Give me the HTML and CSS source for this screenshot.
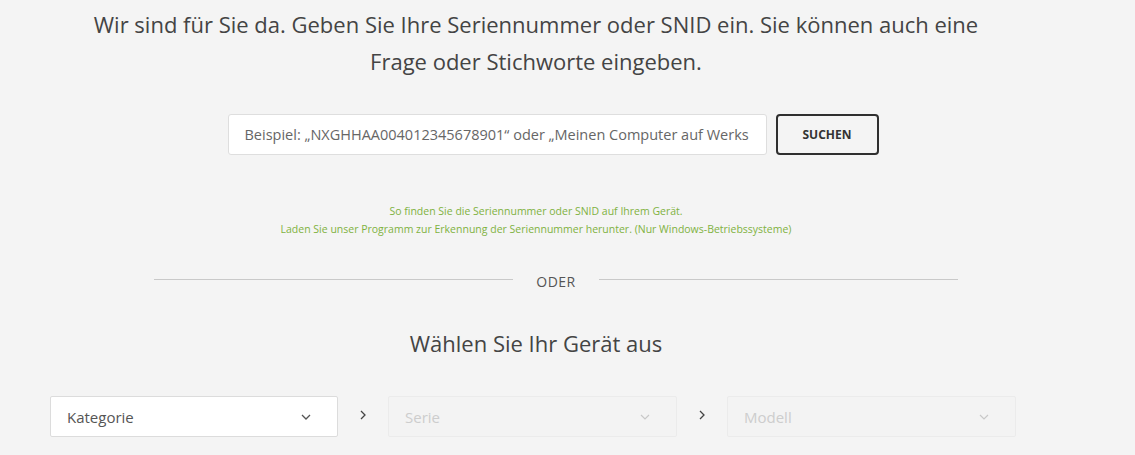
FILE: index.html
```html
<!DOCTYPE html>
<html lang="de">
<head>
<meta charset="utf-8">
<link rel="stylesheet" href="styles.css">
</head>
<body>
<main class="page">
  <h1 class="intro">Wir sind für Sie da. Geben Sie Ihre Seriennummer oder SNID ein. Sie können auch eine Frage oder Stichworte eingeben.</h1>
  <form class="search">
    <div class="search-input">Beispiel: „NXGHHAA004012345678901“ oder „Meinen Computer auf Werks</div>
    <button type="button" class="search-btn">SUCHEN</button>
  </form>
  <div class="hints">
    <a class="hint">So finden Sie die Seriennummer oder SNID auf Ihrem Gerät.</a>
    <a class="hint">Laden Sie unser Programm zur Erkennung der Seriennummer herunter. (Nur Windows-Betriebssysteme)</a>
  </div>
  <div class="divider">
    <span class="rule"></span>
    <span class="divider-text">ODER</span>
    <span class="rule"></span>
  </div>
  <h2 class="device-title">Wählen Sie Ihr Gerät aus</h2>
  <div class="selects">
    <div class="select">
      <span class="select-label">Kategorie</span>
      <svg class="caret" width="10" height="6" viewBox="0 0 10 6"><path d="M1 1l4 4 4-4" fill="none" stroke="#555" stroke-width="1.3"/></svg>
    </div>
    <div class="step"><svg width="6" height="10" viewBox="0 0 6 10"><path d="M1 1l4 4-4 4" fill="none" stroke="#444" stroke-width="1.3"/></svg></div>
    <div class="select disabled">
      <span class="select-label">Serie</span>
      <svg class="caret" width="10" height="6" viewBox="0 0 10 6"><path d="M1 1l4 4 4-4" fill="none" stroke="#c8c8c8" stroke-width="1.2"/></svg>
    </div>
    <div class="step"><svg width="6" height="10" viewBox="0 0 6 10"><path d="M1 1l4 4-4 4" fill="none" stroke="#444" stroke-width="1.3"/></svg></div>
    <div class="select disabled">
      <span class="select-label">Modell</span>
      <svg class="caret" width="10" height="6" viewBox="0 0 10 6"><path d="M1 1l4 4 4-4" fill="none" stroke="#c8c8c8" stroke-width="1.2"/></svg>
    </div>
  </div>
</main>
</body>
</html>
```

FILE: styles.css
```css
html, body {
  margin: 0;
  padding: 0;
  background: #f4f4f4;
}
body {
  font-family: "Open Sans", "Noto Sans", sans-serif;
  color: #444;
  overflow: hidden;
}
.page {
  width: 1072px;
  display: flex;
  flex-direction: column;
}
.intro {
  margin: 6px 0 0;
  padding: 0 80px;
  font-size: 22px;
  font-weight: 400;
  line-height: 37px;
  text-align: center;
  color: #444;
}
.search {
  margin: 34px 0 0;
  display: flex;
  justify-content: center;
  padding-left: 34px;
  gap: 9px;
}
.search-input {
  box-sizing: border-box;
  width: 539px;
  height: 41px;
  padding: 0 16px;
  background: #fff;
  border: 1px solid #dedede;
  border-radius: 3px;
  font-size: 14.5px;
  line-height: 39px;
  color: #666;
  white-space: nowrap;
  overflow: hidden;
}
.search-btn {
  box-sizing: border-box;
  width: 103px;
  height: 41px;
  border: 2px solid #2f2f2f;
  border-radius: 4px;
  background: #f4f4f4;
  font-family: "Open Sans", "Noto Sans", sans-serif;
  font-size: 12px;
  font-weight: 700;
  color: #333;
  padding: 0;
}
.hints {
  margin-top: 47px;
  display: flex;
  flex-direction: column;
  align-items: center;
}
.hint {
  font-size: 10.5px;
  line-height: 18px;
  color: #7fb241;
}
.divider {
  margin: 31px 0 0 154px;
  width: 804px;
  display: flex;
  align-items: center;
}
.rule {
  flex: 1;
  height: 1px;
  background: #c9c9c9;
}
.divider-text {
  width: 86px;
  text-align: center;
  font-size: 14px;
  letter-spacing: 0.5px;
  color: #555;
  line-height: 20px;
  position: relative;
  top: 3px;
}
.device-title {
  margin: 38px 0 0;
  text-align: center;
  font-size: 22px;
  font-weight: 400;
  line-height: 32px;
  color: #444;
}
.selects {
  margin: 37px 0 0 50px;
  display: flex;
  align-items: center;
}
.select {
  box-sizing: border-box;
  width: 288px;
  height: 41px;
  padding: 0 22px 0 16px;
  background: #fff;
  border: 1px solid #dcdcdc;
  border-radius: 2px;
  display: flex;
  align-items: center;
  justify-content: space-between;
}
.select-label {
  font-size: 15px;
  color: #555;
}
.select.disabled {
  background: #f3f3f3;
  border-color: #ebebeb;
  width: 289px;
}
.select.disabled .select-label {
  color: #cdcdcd;
}
.caret {
  display: block;
  margin-right: 4px;
}
.step {
  width: 50px;
  display: flex;
  justify-content: center;
  position: relative;
  top: -2px;
}
.step svg {
  display: block;
}
```
